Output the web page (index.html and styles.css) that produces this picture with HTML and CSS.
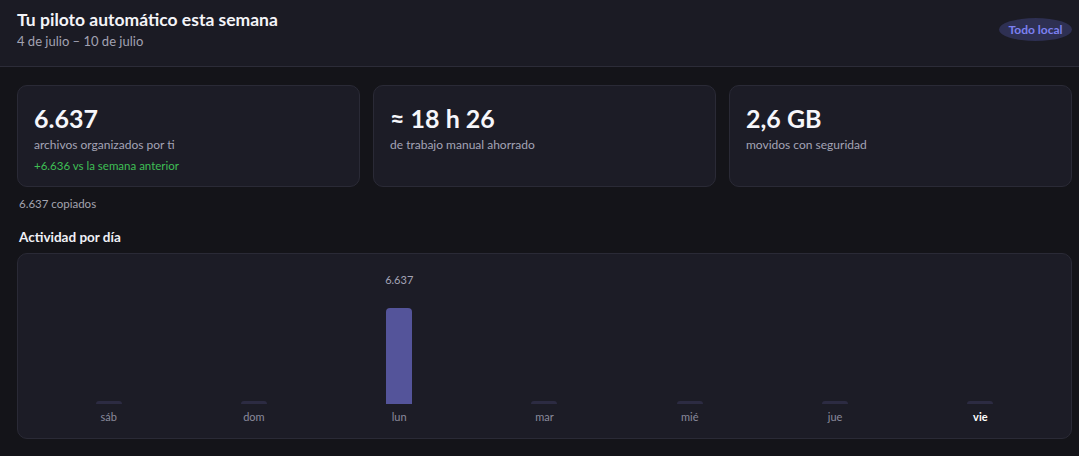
FILE: index.html
```html
<!DOCTYPE html>
<html lang="es">
<head>
<meta charset="utf-8">
<title>Tu piloto automático</title>
<link rel="stylesheet" href="styles.css">
</head>
<body>
<header class="header">
  <div class="header-text">
    <h1 class="title">Tu piloto automático esta semana</h1>
    <div class="subtitle">4 de julio – 10 de julio</div>
  </div>
  <span class="badge">Todo local</span>
</header>
<main class="main">
  <section class="cards">
    <div class="card">
      <div class="big">6.637</div>
      <div class="label">archivos organizados por ti</div>
      <div class="delta">+6.636 vs la semana anterior</div>
    </div>
    <div class="card">
      <div class="big">≈ 18 h 26</div>
      <div class="label">de trabajo manual ahorrado</div>
    </div>
    <div class="card">
      <div class="big">2,6 GB</div>
      <div class="label">movidos con seguridad</div>
    </div>
  </section>
  <div class="note">6.637 copiados</div>
  <h2 class="section-title">Actividad por día</h2>
  <section class="chart">
    <div class="col"><div class="plot"><div class="bar empty"></div></div><div class="day">sáb</div></div>
    <div class="col"><div class="plot"><div class="bar empty"></div></div><div class="day">dom</div></div>
    <div class="col"><div class="plot"><div class="value">6.637</div><div class="bar" style="height:96px"></div></div><div class="day">lun</div></div>
    <div class="col"><div class="plot"><div class="bar empty"></div></div><div class="day">mar</div></div>
    <div class="col"><div class="plot"><div class="bar empty"></div></div><div class="day">mié</div></div>
    <div class="col"><div class="plot"><div class="bar empty"></div></div><div class="day">jue</div></div>
    <div class="col"><div class="plot"><div class="bar empty"></div></div><div class="day today">vie</div></div>
  </section>
</main>
</body>
</html>
```

FILE: styles.css
```css
* { box-sizing: border-box; }
html, body { margin: 0; padding: 0; }
body {
  background: #141419;
  color: #e8e8ee;
  font-family: "Lato", "Noto Sans", sans-serif;
  width: 1079px;
  height: 456px;
  overflow: hidden;
}
.header {
  background: #1b1b24;
  border-bottom: 1px solid #2c2c38;
  height: 67px;
  padding: 8px 7px 0 17px;
  display: flex;
  justify-content: space-between;
  align-items: flex-start;
}
.title {
  margin: 0;
  font-size: 17.5px;
  font-weight: 700;
  line-height: 24px;
  color: #f4f4f8;
}
.subtitle {
  font-size: 13px;
  line-height: 18px;
  color: #a2a2b2;
}
.badge {
  margin-top: 10px;
  width: 73px;
  height: 23px;
  border-radius: 50%;
  background: #2e3052;
  color: #7c80f0;
  font-size: 12px;
  font-weight: 700;
  display: flex;
  align-items: center;
  justify-content: center;
}
.main { padding: 18px 7px 0 17px; }
.cards {
  display: grid;
  grid-template-columns: repeat(3, 1fr);
  gap: 13px;
}
.card {
  height: 102px;
  background: #1c1c26;
  border: 1px solid #2a2a36;
  border-radius: 10px;
  padding: 16px 16px 0 16px;
}
.big {
  font-size: 25px;
  font-weight: 700;
  line-height: 32px;
  color: #f6f6fa;
}
.label {
  margin-top: 3px;
  font-size: 12px;
  line-height: 16px;
  color: #a4a4b6;
}
.delta {
  margin-top: 5px;
  font-size: 11.5px;
  line-height: 16px;
  color: #3fbf55;
}
.note {
  margin: 9px 0 0 2px;
  font-size: 11.5px;
  line-height: 16px;
  color: #a4a4b0;
}
.section-title {
  margin: 16px 0 0 2px;
  font-size: 13.5px;
  font-weight: 700;
  line-height: 18px;
  color: #f0f0f6;
}
.chart {
  margin-top: 7px;
  height: 186px;
  background: #1c1c26;
  border: 1px solid #2a2a36;
  border-radius: 10px;
  padding: 18px 18px 0 18px;
  display: grid;
  grid-template-columns: repeat(7, 1fr);
}
.col {
  display: flex;
  flex-direction: column;
  align-items: center;
}
.plot {
  height: 132px;
  width: 100%;
  display: flex;
  flex-direction: column;
  align-items: center;
  justify-content: flex-end;
  position: relative;
}
.value {
  position: absolute;
  top: 0;
  font-size: 11px;
  line-height: 16px;
  color: #a4a4b6;
}
.bar {
  width: 26px;
  background: #54549a;
  border-radius: 4px 4px 0 0;
}
.bar.empty {
  height: 3px;
  background: #2c2b42;
  border-radius: 4px 4px 0 0;
}
.day {
  margin-top: 5px;
  font-size: 11px;
  line-height: 16px;
  color: #8a8a9c;
}
.day.today {
  color: #ffffff;
  font-weight: 700;
}
```
